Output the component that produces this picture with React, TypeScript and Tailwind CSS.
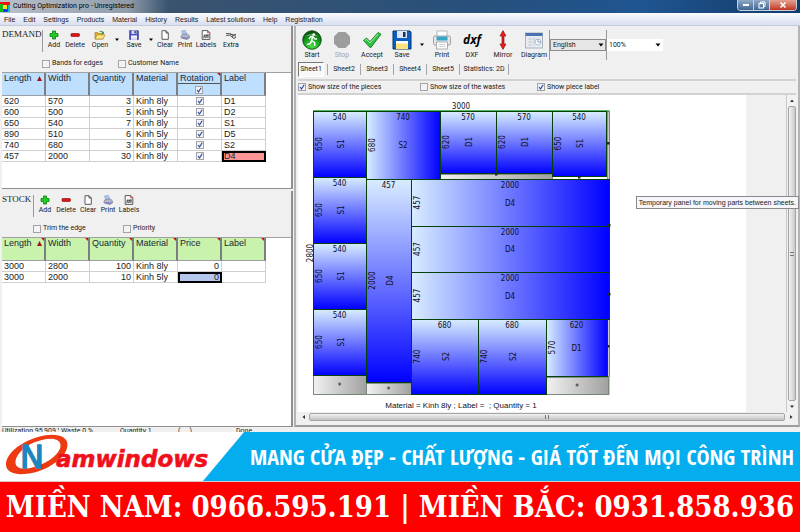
import React from "react";
import clsx from "clsx";

type CellValue = string | boolean;

interface Column {
  label: string;
  sorted?: boolean;
  flagged?: boolean;
  toggle?: boolean;
  numeric?: boolean;
}

interface Piece {
  x: number;
  y: number;
  w: number;
  h: number;
  width: string;
  height: string;
  label: string;
  dir: "down" | "right";
}

const MENU = [
  "File",
  "Edit",
  "Settings",
  "Products",
  "Material",
  "History",
  "Results",
  "Latest solutions",
  "Help",
  "Registration",
];

const DEMAND_COLUMNS: Column[] = [
  { label: "Length", sorted: true },
  { label: "Width" },
  { label: "Quantity", numeric: true },
  { label: "Material" },
  { label: "Rotation", toggle: true, flagged: true },
  { label: "Label" },
];

const DEMAND_ROWS: CellValue[][] = [
  ["620", "570", "3", "Kinh 8ly", true, "D1"],
  ["600", "500", "5", "Kinh 5ly", true, "D2"],
  ["650", "540", "7", "Kinh 8ly", true, "S1"],
  ["890", "510", "6", "Kinh 5ly", true, "D5"],
  ["740", "680", "3", "Kinh 8ly", true, "S2"],
  ["457", "2000", "30", "Kinh 8ly", true, "D4"],
];

const STOCK_COLUMNS: Column[] = [
  { label: "Length", sorted: true, flagged: true },
  { label: "Width", flagged: true },
  { label: "Quantity", numeric: true, flagged: true },
  { label: "Material", flagged: true },
  { label: "Price", numeric: true, flagged: true },
  { label: "Label", flagged: true },
];

const STOCK_ROWS: CellValue[][] = [
  ["3000", "2800", "100", "Kinh 8ly", "0", ""],
  ["3000", "2000", "10", "Kinh 5ly", "0", ""],
];

const SHEETS = ["Sheet1", "Sheet2", "Sheet3", "Sheet4", "Sheet5"];

const PIECES: Piece[] = [
  { x: 15, y: 16, w: 53, h: 66, width: "540", height: "650", label: "S1", dir: "down" },
  { x: 15, y: 82, w: 53, h: 66, width: "540", height: "650", label: "S1", dir: "down" },
  { x: 15, y: 148, w: 53, h: 66, width: "540", height: "650", label: "S1", dir: "down" },
  { x: 15, y: 214, w: 53, h: 66, width: "540", height: "650", label: "S1", dir: "down" },
  { x: 68, y: 16, w: 74, h: 68, width: "740", height: "680", label: "S2", dir: "right" },
  { x: 142, y: 16, w: 56, h: 62, width: "570", height: "620", label: "D1", dir: "down" },
  { x: 198, y: 16, w: 56, h: 62, width: "570", height: "620", label: "D1", dir: "down" },
  { x: 254, y: 16, w: 54, h: 65, width: "540", height: "650", label: "S1", dir: "down" },
  { x: 68, y: 84, w: 45, h: 203, width: "457", height: "2000", label: "D4", dir: "down" },
  { x: 113, y: 84, w: 198, h: 47, width: "2000", height: "457", label: "D4", dir: "right" },
  { x: 113, y: 131, w: 198, h: 46, width: "2000", height: "457", label: "D4", dir: "right" },
  { x: 113, y: 177, w: 198, h: 47, width: "2000", height: "457", label: "D4", dir: "right" },
  { x: 113, y: 224, w: 67, h: 75, width: "680", height: "740", label: "S2", dir: "down" },
  { x: 180, y: 224, w: 68, h: 75, width: "680", height: "740", label: "S2", dir: "down" },
  { x: 248, y: 224, w: 61, h: 57, width: "620", height: "570", label: "D1", dir: "right" },
];

const WASTES = [
  { x: 15, y: 280, w: 53, h: 19, star: true },
  { x: 68, y: 288, w: 45, h: 11, star: true },
  { x: 248, y: 282, w: 62, h: 17, star: true },
  { x: 142, y: 79, w: 112, h: 5, star: false },
  { x: 309, y: 16, w: 2, h: 68, star: false },
  { x: 309, y: 224, w: 2, h: 57, star: false },
];

const MARKS = [
  [198, 79],
  [281, 82],
  [310, 48],
  [311, 130],
  [311, 199],
  [310, 251],
];

function AddIcon() {
  return (
    <svg viewBox="0 0 10 10" className="size-[10px]">
      <path d="M3.5 1h3v2.5H9v3H6.500V9h-3V6.500H1v-3h2.500z" fill="#1fd01f" stroke="#0a7a14" strokeWidth="0.8" />
    </svg>
  );
}

function DeleteIcon() {
  return (
    <svg viewBox="0 0 10 10" className="size-[10px]">
      <rect x="1" y="3.600" width="8.400" height="2.800" rx="0.600" fill="#e01818" stroke="#8c0a0a" strokeWidth="0.7" />
    </svg>
  );
}

function OpenIcon() {
  return (
    <svg viewBox="0 0 12 10" className="h-[10px] w-3">
      <path d="M1 9V2.500h3l1 1h4V9z" fill="#d9b233" stroke="#9a7a14" strokeWidth="0.6" />
      <path d="M1 9l2-4.200h8L9 9z" fill="#ffe680" stroke="#9a7a14" strokeWidth="0.6" />
      <path d="M5 2.200C6 .4 8 .4 9 2l1-.6v2.600H7.500L8.200 3C7.500 1.800 6.200 1.600 5 2.200z" fill="#3ca03c" />
    </svg>
  );
}

function SaveIcon({ large = false }: { large?: boolean }) {
  return (
    <svg viewBox="0 0 20 20" className={large ? "size-5" : "size-[10px]"}>
      <path d="M1 1h17l1 1.500V19H1z" fill={large ? "#0b5ec2" : "#4a4fc4"} stroke={large ? "#08366e" : "#2a2c84"} />
      <rect x="5" y="1" width="10" height="7" fill={large ? "#dfe8f2" : "#d8daf8"} />
      <rect x="11" y="2" width="2.500" height="5" fill="#1a2f56" />
      <rect x="4" y="11" width="12" height="8" fill="#fff" />
      <rect x="4" y="13.500" width="12" height="5.500" fill={large ? "#ffe27a" : "#dfe0f4"} />
    </svg>
  );
}

function ClearIcon() {
  return (
    <svg viewBox="0 0 10 10" className="size-[10px]">
      <path d="M2 .7h4L8.300 3v6.300H2z" fill="#fff" stroke="#333" strokeWidth="0.8" />
      <path d="M6 .7V3h2.300" fill="none" stroke="#333" strokeWidth="0.8" />
    </svg>
  );
}

function SmallPrintIcon() {
  return (
    <svg viewBox="0 0 10 10" className="size-[10px]">
      <path d="M2.500 5L1.600 1l3.600-.8L7 4.500z" fill="#a9c6f5" stroke="#7d8fc0" strokeWidth="0.5" />
      <path d="M1 6l1.500-1.600 5-.4L9.500 6v2L7 9.500 1 8z" fill="#b4b6c8" stroke="#74768c" strokeWidth="0.6" />
      <path d="M2.500 7.600l4 .8 2-1.200" fill="none" stroke="#4f62c8" strokeWidth="0.9" />
    </svg>
  );
}

function LabelsIcon() {
  return (
    <svg viewBox="0 0 10 10" className="size-[10px]">
      <path d="M1.200.6h5.600L8.800 2.600v6.800H1.200z" fill="#fff" stroke="#333" strokeWidth="0.8" />
      <path d="M6.600.8v2h2" fill="none" stroke="#c22" strokeWidth="0.8" />
      <path d="M2.600 8.200L4 4.200m.6 4L6 4.200m1 4V4M2.600 5.400h5M2.400 7h5" stroke="#333" strokeWidth="0.7" />
    </svg>
  );
}

function ExtraIcon() {
  return (
    <svg viewBox="0 0 12 10" className="h-[10px] w-3">
      <path d="M1 3.500l4 .3 3 1.200 3-.6M1 5.400l3.600-.2L8 7.600M5 3.800l3 1.600" fill="none" stroke="#444" strokeWidth="0.9" />
      <circle cx="9" cy="6.800" r="1.600" fill="#ddd" stroke="#444" strokeWidth="0.8" />
    </svg>
  );
}

function StartIcon() {
  return (
    <svg viewBox="0 0 20 20" className="size-5">
      <defs>
        <radialGradient id="go" cx="0.5" cy="0.85" r="0.8">
          <stop offset="0" stopColor="#4be04b" />
          <stop offset="0.6" stopColor="#129a1c" />
          <stop offset="1" stopColor="#064d0b" />
        </radialGradient>
      </defs>
      <circle cx="10" cy="10" r="9.300" fill="url(#go)" stroke="#0b3d0d" strokeWidth="0.8" />
      <path d="M3 7a8 6 0 0 1 14 0c-4-2-10-2-14 0z" fill="#fff" opacity="0.35" />
      <circle cx="11.800" cy="4.600" r="1.400" fill="#fff" />
      <path
        d="M10.800 6.400L9.600 10.500l3 2 .2 3.500M9.600 10.500L8.400 13.500 4.800 14.600M7 9l1.500-2.200 2.500-.2 1.600 2.200 2.400.2"
        fill="none"
        stroke="#fff"
        strokeWidth="1.500"
        strokeLinejoin="round"
      />
    </svg>
  );
}

function StopIcon() {
  return (
    <svg viewBox="0 0 20 20" className="size-5">
      <path d="M6.500 2h7L18 6.500v7L13.500 18h-7L2 13.500v-7z" fill="#9d9d9d" />
    </svg>
  );
}

function AcceptIcon() {
  return (
    <svg viewBox="0 0 20 20" className="size-5">
      <path d="M1.500 10.500L4.500 8l3.500 3.500L16 2.500l3 1.800L8.500 18z" fill="#2fc043" stroke="#128024" strokeWidth="0.9" />
      <path d="M3 10.500l1.500-1.200L8 13 16 4" fill="none" stroke="#a5f0ac" strokeWidth="1" />
    </svg>
  );
}

function PrintIcon() {
  return (
    <svg viewBox="0 0 20 20" className="size-5">
      <rect x="5" y="1" width="10" height="6" fill="#fff" stroke="#9aa0a6" strokeWidth="0.7" />
      <rect x="1.500" y="6" width="17" height="9" rx="1.500" fill="#e4e6e8" stroke="#8b9096" strokeWidth="0.8" />
      <rect x="4.500" y="6.500" width="11" height="4" fill="#39a6c6" />
      <rect x="4.500" y="12" width="11" height="7" fill="#fff" stroke="#8b9096" strokeWidth="0.7" />
      <path d="M6.500 14.500h7M6.500 16.500h7" stroke="#b9bec4" strokeWidth="0.7" />
    </svg>
  );
}

function DxfIcon() {
  return <span className="font-['Open_Sans',sans-serif] text-[12px]/[20px] font-bold text-black italic">dxf</span>;
}

function MirrorIcon() {
  return (
    <svg viewBox="0 0 20 20" className="size-5">
      <path d="M10 .6l3 5.400h-2v8h2l-3 5.400L7 14h2V6H7z" fill="#ee1c1c" stroke="#7a0b0b" strokeWidth="0.6" />
    </svg>
  );
}

function DiagramIcon() {
  return (
    <svg viewBox="0 0 20 20" className="size-5">
      <rect x="1.500" y="3" width="17" height="15" fill="#e9edf3" stroke="#9aa3b0" strokeWidth="0.8" />
      <rect x="1.500" y="3" width="17" height="3" fill="#4a72b0" />
      <path d="M4 9h8M4 12h8M4 15h5M6 7.500v9M10 7.500v9" stroke="#c6ccd6" strokeWidth="0.8" />
      <circle cx="14" cy="12" r="3" fill="#f7f7f7" stroke="#aab3c2" strokeWidth="0.8" />
      <path d="M14 9v3h3" fill="none" stroke="#7d9ccc" strokeWidth="0.9" />
    </svg>
  );
}

function ToolButton({
  icon,
  label,
  className,
  disabled = false,
}: {
  icon: React.ReactNode;
  label: string;
  className: string;
  disabled?: boolean;
}) {
  return (
    <button
      type="button"
      disabled={disabled}
      className={clsx("flex flex-col items-center gap-px whitespace-nowrap disabled:text-[#a5a5a5]", className)}
    >
      {icon}
      <span>{label}</span>
    </button>
  );
}

function DropArrow({ label, className }: { label: string; className: string }) {
  return (
    <button type="button" aria-label={label} className={clsx("flex items-center justify-center", className)}>
      <svg viewBox="0 0 6 4" className="h-1 w-1.5">
        <path d="M1 .5h4L3 3z" fill="#000" />
      </svg>
    </button>
  );
}

function TickBox({ id, checked = false, label }: { id?: string; checked?: boolean; label?: string }) {
  return (
    <span className="relative inline-block size-2 shrink-0">
      <input
        id={id}
        type="checkbox"
        defaultChecked={checked}
        aria-label={label}
        className="peer block size-2 appearance-none border border-[#a3a3a3] bg-[#f1f3f7]"
      />
      <svg viewBox="0 0 8 8" className="pointer-events-none absolute inset-0 hidden size-2 peer-checked:block">
        <path d="M2 4l1.500 2L6.200 1.800" fill="none" stroke="#2f4a9c" strokeWidth="1.200" />
      </svg>
    </span>
  );
}

function Option({
  id,
  label,
  checked,
  className,
}: {
  id: string;
  label: string;
  checked?: boolean;
  className?: string;
}) {
  return (
    <span className={clsx("flex items-center gap-0.5 whitespace-nowrap", className)}>
      <TickBox id={id} checked={checked} />
      <label htmlFor={id}>{label}</label>
    </span>
  );
}

function DataGrid({
  name,
  columns,
  rows,
  tone,
  selected,
}: {
  name: string;
  columns: Column[];
  rows: CellValue[][];
  tone: "blue" | "green";
  selected: [number, number];
}) {
  return (
    <table
      aria-label={name}
      className="w-[264px] table-fixed border-separate border-spacing-0 font-['Liberation_Sans',sans-serif] text-[9px]/[10px]"
    >
      <thead>
        <tr>
          {columns.map((column) => (
            <th
              key={column.label}
              className={clsx(
                "relative h-[23px] border-r-2 border-b border-r-[#7b7f84] border-b-[#9aa0a6] p-0 text-left align-top font-normal text-[#1c2733]",
                tone === "blue" ? "bg-[#bfdfff]" : "bg-[#c9f3ad]"
              )}
            >
              <span className="block pl-0.5">{column.label}</span>
              {column.toggle ? (
                <span className="flex h-3 items-center justify-center border-t border-[#555]">
                  <TickBox checked label="Rotate all pieces" />
                </span>
              ) : null}
              {column.sorted ? (
                <svg viewBox="0 0 5 5" className="absolute top-[3px] right-0.5 size-[5px]">
                  <path d="M2.500 0L5 5H0z" fill="#a01414" />
                </svg>
              ) : null}
              {column.flagged ? (
                <svg viewBox="0 0 3 3" className="absolute top-0 right-0 size-[3px]">
                  <path d="M0 0h3v3z" fill="#e00" />
                </svg>
              ) : null}
            </th>
          ))}
        </tr>
      </thead>
      <tbody>
        {rows.map((row, r) => (
          <tr key={r}>
            {row.map((value, c) => {
              const isSelected = selected[0] === r && selected[1] === c;
              return (
                <td
                  key={c}
                  className={clsx(
                    "h-[11px] border-r border-b border-[#cfcfcf] p-0 px-0.5 text-[#222]",
                    columns[c].numeric && "text-right",
                    columns[c].toggle && "text-center",
                    isSelected && "outline-2 -outline-offset-2 outline-black",
                    isSelected && (tone === "blue" ? "bg-[#ff9696]" : "bg-[#b4c8ee]")
                  )}
                >
                  {typeof value === "boolean" ? (
                    <span className="flex items-center justify-center">
                      <TickBox checked={value} label={`Rotate ${row[row.length - 1]}`} />
                    </span>
                  ) : (
                    value
                  )}
                </td>
              );
            })}
          </tr>
        ))}
      </tbody>
    </table>
  );
}

function DemandPanel() {
  return (
    <section className="border-r-2 border-b border-[#8f8f8f] bg-white">
      <div className="flex border-b border-[#a0a0a0] bg-[#f0f0f0] pt-1 pb-1">
        <h2 className="w-10 shrink-0 font-['Liberation_Serif',serif] text-[9px]/[9px]">DEMAND</h2>
        <div>
          <div className="flex h-[22px] items-start border-l border-[#9a9a9a] pl-px">
            <ToolButton icon={<AddIcon />} label="Add" className="w-5" />
            <ToolButton icon={<DeleteIcon />} label="Delete" className="w-[22px]" />
            <ToolButton icon={<OpenIcon />} label="Open" className="w-7" />
            <DropArrow label="Open recent" className="h-5 w-1.5" />
            <ToolButton icon={<SaveIcon />} label="Save" className="w-7" />
            <DropArrow label="Save options" className="h-5 w-1.5" />
            <ToolButton icon={<ClearIcon />} label="Clear" className="w-[22px]" />
            <ToolButton icon={<SmallPrintIcon />} label="Print" className="w-[18px]" />
            <ToolButton icon={<LabelsIcon />} label="Labels" className="w-6" />
            <ToolButton icon={<ExtraIcon />} label="Extra" className="w-[26px]" />
          </div>
          <div className="mt-[7px] flex h-[9px] items-center">
            <Option id="bands" label="Bands for edges" className="w-[76px]" />
            <Option id="customer" label="Customer Name" />
          </div>
        </div>
      </div>
      <div className="h-[115px] overflow-hidden">
        <DataGrid name="Demand" columns={DEMAND_COLUMNS} rows={DEMAND_ROWS} tone="blue" selected={[5, 5]} />
      </div>
    </section>
  );
}

function StockPanel() {
  return (
    <section className="flex-1 border-r-2 border-b border-[#8f8f8f] bg-white">
      <div className="flex border-b border-[#a0a0a0] bg-[#f0f0f0] pt-1 pb-1">
        <h2 className="w-[31px] shrink-0 font-['Liberation_Serif',serif] text-[9px]/[9px]">STOCK</h2>
        <div>
          <div className="flex h-[22px] items-start border-l border-[#9a9a9a] pl-px">
            <ToolButton icon={<AddIcon />} label="Add" className="w-5" />
            <ToolButton icon={<DeleteIcon />} label="Delete" className="w-[22px]" />
            <ToolButton icon={<ClearIcon />} label="Clear" className="w-[22px]" />
            <ToolButton icon={<SmallPrintIcon />} label="Print" className="w-[18px]" />
            <ToolButton icon={<LabelsIcon />} label="Labels" className="w-6" />
          </div>
          <div className="mt-[7px] flex h-[9px] items-center">
            <Option id="trim" label="Trim the edge" className="w-[90px]" />
            <Option id="priority" label="Priority" />
          </div>
        </div>
      </div>
      <DataGrid name="Stock" columns={STOCK_COLUMNS} rows={STOCK_ROWS} tone="green" selected={[1, 4]} />
    </section>
  );
}

function Picker({ label, value, className }: { label: string; value: string; className: string }) {
  return (
    <span className="relative block">
      <select aria-label={label} className={clsx("block h-3 w-14 appearance-none pl-0.5", className)}>
        <option>{value}</option>
      </select>
      <svg viewBox="0 0 6 4" className="pointer-events-none absolute top-1 right-0.5 h-1 w-1.5">
        <path d="M.5 .5h5L3 3.500z" fill="#000" />
      </svg>
    </span>
  );
}

// A vertical caption, turned to read bottom to top
function TurnedText({ x, y, children }: { x: number; y: number; children: React.ReactNode }) {
  return (
    <text x={x} y={y + 3} textAnchor="middle" transform={`rotate(-90 ${x} ${y})`}>
      {children}
    </text>
  );
}

function CuttingLayout() {
  return (
    <svg
      viewBox="0 0 448 316"
      className="block h-[316px] w-[448px] font-['DejaVu_Sans_Condensed','DejaVu_Sans',sans-serif] text-[8px]"
      fill="#10101c"
    >
      <defs>
        <linearGradient id="down" x1="0" y1="0" x2="0" y2="1">
          <stop offset="0" stopColor="#d8edff" />
          <stop offset="1" stopColor="#0000ff" />
        </linearGradient>
        <linearGradient id="right">
          <stop offset="0" stopColor="#d8edff" />
          <stop offset="1" stopColor="#0000ff" />
        </linearGradient>
        <linearGradient id="waste">
          <stop offset="0" stopColor="#f2f2f2" />
          <stop offset="1" stopColor="#a0a0a0" />
        </linearGradient>
      </defs>
      <rect x="15.500" y="15.500" width="295.500" height="284" fill="#fff" stroke="#5cb85c" />
      {WASTES.map((waste) => (
        <g key={`${waste.x}-${waste.y}`}>
          <rect
            x={waste.x + 0.5}
            y={waste.y + 0.5}
            width={waste.w}
            height={waste.h}
            fill="url(#waste)"
            stroke="#6f7a6f"
            strokeWidth="0.8"
          />
          {waste.star ? (
            <text x={waste.x + waste.w / 2} y={waste.y + waste.h / 2 + 4} textAnchor="middle">
              *
            </text>
          ) : null}
        </g>
      ))}
      {PIECES.map((piece) => {
        const cx = piece.x + piece.w / 2;
        const cy = piece.y + piece.h / 2;
        return (
          <g key={`${piece.x}-${piece.y}`}>
            <rect
              x={piece.x + 0.5}
              y={piece.y + 0.5}
              width={piece.w}
              height={piece.h}
              fill={piece.dir === "down" ? "url(#down)" : "url(#right)"}
              stroke="#06400a"
            />
            <text x={cx} y={piece.y + 9} textAnchor="middle">
              {piece.width}
            </text>
            <TurnedText x={piece.x + 6} y={cy}>
              {piece.height}
            </TurnedText>
            {piece.dir === "down" ? (
              <TurnedText x={cx + 1} y={cy}>
                {piece.label}
              </TurnedText>
            ) : (
              <text x={cx} y={cy + 3} textAnchor="middle">
                {piece.label}
              </text>
            )}
          </g>
        );
      })}
      {MARKS.map(([x, y]) => (
        <rect key={`${x}-${y}`} x={x - 1} y={y - 1} width="2.500" height="2.500" fill="#1d2b1d" />
      ))}
      <text x="163" y="14" textAnchor="middle">
        3000
      </text>
      <TurnedText x={12} y={158}>
        2800
      </TurnedText>
      <text x="163" y="313" textAnchor="middle" xmlSpace="preserve" fontFamily="Liberation Sans, sans-serif">
        {"Material = Kinh 8ly ; Label =  ; Quantity = 1"}
      </text>
    </svg>
  );
}

function ResultPanel() {
  return (
    <section className="flex min-w-0 flex-1 flex-col border-2 border-t-0 border-[#b4b4b4] border-b-[#9c9c9c] bg-[#f0f0f0]">
      <div className="flex h-[35px] items-start pt-1 pl-px">
        <ToolButton icon={<StartIcon />} label="Start" className="w-[30px]" />
        <ToolButton icon={<StopIcon />} label="Stop" className="w-[30px]" disabled />
        <ToolButton icon={<AcceptIcon />} label="Accept" className="w-[30px]" />
        <ToolButton icon={<SaveIcon large />} label="Save" className="w-[30px]" />
        <DropArrow label="Save options" className="h-[30px] w-2.5" />
        <ToolButton icon={<PrintIcon />} label="Print" className="w-[30px]" />
        <ToolButton icon={<DxfIcon />} label="DXF" className="w-[30px]" />
        <ToolButton icon={<MirrorIcon />} label="Mirror" className="w-8" />
        <ToolButton icon={<DiagramIcon />} label="Diagram" className="w-[30px]" />
        <div className="flex h-[30px] items-center border-l border-[#9a9a9a]">
          <Picker label="Language" value="English" className="border border-[#8c8c8c] bg-[#e6e6e6]" />
        </div>
        <div className="flex h-[30px] items-center border-l border-[#9a9a9a]">
          <Picker label="Zoom" value="100%" className="bg-white" />
        </div>
      </div>

      <div role="tablist" className="mt-px flex h-[15px] items-stretch pl-0.5">
        {SHEETS.map((sheet, i) => (
          <button
            key={sheet}
            type="button"
            role="tab"
            aria-selected={i === 0}
            className={clsx(
              "text-center",
              i === 0
                ? "mr-[3px] w-[26px] border border-[#777] border-r-white border-b-white bg-[#f8f8f8]"
                : "my-0.5 w-[33px] border-l border-[#a6a6a6]"
            )}
          >
            {sheet}
          </button>
        ))}
        <button type="button" role="tab" aria-selected={false} className="my-0.5 w-[50px] border-x border-[#a6a6a6]">
          Statistics: 2D
        </button>
      </div>

      <div className="mx-0.5 mt-0.5 flex h-4 items-center border-y-2 border-[#d2d2d2]">
        <Option id="pieces" label="Show size of the pieces" checked className="w-[122px]" />
        <Option id="wastes" label="Show size of the wastes" className="w-[117px]" />
        <Option id="labels" label="Show piece label" checked />
      </div>

      <div className="ml-0.5 flex flex-1">
        <div className="bg-white">
          <CuttingLayout />
        </div>
        <div className="relative flex-1">
          <div
            role="tooltip"
            className="absolute top-[101px] -right-[13px] z-10 border border-[#8a8a8a] bg-[#f6f6fa] px-0.5 py-px font-['Liberation_Sans',sans-serif] text-[7px]/[9px] whitespace-nowrap text-[#222]"
          >
            Temporary panel for moving parts between sheets.
          </div>
        </div>
        <div className="mr-0.5 flex w-[10px] flex-col items-center border-l border-[#c8c8c8] bg-[#f2f2f2]">
          <button type="button" aria-label="Scroll up" className="flex h-[11px] items-center">
            <svg viewBox="0 0 6 4" className="h-1 w-1.5">
              <path d="M1 3h4L3 .5z" fill="#333" />
            </svg>
          </button>
          <div className="flex w-2 flex-1 items-center justify-center rounded-xs border border-[#a4a4a4] bg-linear-to-r from-[#f2f2f2] to-[#c9c9cd]">
            <span className="h-1 w-1 border-y border-[#777]" />
          </div>
          <button type="button" aria-label="Scroll down" className="flex h-[11px] items-center">
            <svg viewBox="0 0 6 4" className="h-1 w-1.5">
              <path d="M1 .5h4L3 3z" fill="#333" />
            </svg>
          </button>
        </div>
      </div>
      <div className="mx-0.5 mb-[3px] flex h-[10px] items-center">
        <button type="button" aria-label="Scroll left" className="flex w-[11px] justify-center">
          <svg viewBox="0 0 4 6" className="h-1.5 w-1">
            <path d="M3 1v4L.5 3z" fill="#333" />
          </svg>
        </button>
        <div className="flex h-2 flex-1 items-center justify-center rounded-xs border border-[#a4a4a4] bg-linear-to-b from-[#f2f2f2] to-[#c2c2c6]">
          <span className="h-1 w-1 border-x border-[#777]" />
        </div>
        <button type="button" aria-label="Scroll right" className="flex w-[11px] justify-center">
          <svg viewBox="0 0 4 6" className="h-1.5 w-1">
            <path d="M1 1v4l2.500-2z" fill="#333" />
          </svg>
        </button>
      </div>
    </section>
  );
}

function TitleBar() {
  return (
    <header className="flex h-[13px] items-start justify-between bg-[linear-gradient(90deg,#b9c1ca_0%,#8f9cab_16%,#3a536e_21%,#27507c_60%,#1f5591_80%,#123a68_100%)]">
      <div className="flex h-full items-center gap-[3px]">
        <svg viewBox="0 0 10 10" className="size-[10px]">
          <rect width="10" height="10" fill="#e11" />
          <rect y="2" width="3" height="8" fill="#14b814" />
          <rect x="3" y="3" width="4" height="4" fill="#ffe11a" />
          <rect x="4" y="7" width="3" height="3" fill="#1838e0" />
          <rect x="8" y="3" width="2" height="7" fill="#14b8c8" />
        </svg>
        <h1 className="text-black">Cutting Optimization pro - Unregistered</h1>
      </div>
      <div className="mr-[3px] flex h-[11px] overflow-hidden rounded-b-sm border border-t-0 border-[#c4d2e2]">
        <button
          type="button"
          aria-label="Minimize"
          className="flex w-4 items-center justify-center border-r border-[#c4d2e2] bg-linear-to-b from-[#8fa9c6] to-[#3f6792]"
        >
          <span className="h-[2px] w-1.5 bg-white" />
        </button>
        <button
          type="button"
          aria-label="Restore"
          className="flex w-4 items-center justify-center border-r border-[#c4d2e2] bg-linear-to-b from-[#8fa9c6] to-[#3f6792]"
        >
          <svg viewBox="0 0 8 8" className="size-2" fill="none" stroke="#fff">
            <path d="M2.500 2.500v-1.500h4.500v4.500H5.500" />
            <rect x="1" y="2.500" width="4.500" height="4.500" />
          </svg>
        </button>
        <button
          type="button"
          aria-label="Close"
          className="flex w-[26px] items-center justify-center bg-linear-to-b from-[#e2a093] to-[#c2301c]"
        >
          <svg viewBox="0 0 8 8" className="size-2" stroke="#fff" strokeWidth="1.600">
            <path d="M1.500 1.500l5 5M6.500 1.500l-5 5" />
          </svg>
        </button>
      </div>
    </header>
  );
}

function Promo() {
  return (
    <footer>
      <div className="flex h-[50px] border-b border-[#d8c8c8] bg-white">
        <div className="w-[203px] shrink-0">
          <svg viewBox="0 0 212 49" className="relative z-10 h-[49px] w-[212px]">
            <path
              fillRule="evenodd"
              d="M38 5C55 0 68 4 67.500 13 67 25 50 37 32 41 17 44 6 41 6 32.500 6 22 20 10 38 5zM42 8C28 11 16 21 15.500 30 15 37 24 38 34 35 48 31 60 22 60.500 14 61 7 52 5.500 42 8z"
              fill="#ee3a12"
            />
            <text
              x="20"
              y="36"
              fontSize="32"
              fill="#1f86bd"
              stroke="#1f86bd"
              strokeWidth="1.500"
              fontFamily="DejaVu Sans, sans-serif"
            >
              N
            </text>
            <text
              x="56"
              y="35"
              fontSize="23"
              fontWeight="700"
              fontStyle="italic"
              fill="#f0101c"
              stroke="#f0101c"
              strokeWidth="0.6"
              fontFamily="DejaVu Sans, sans-serif"
            >
              amwindows
            </text>
          </svg>
        </div>
        <p className="flex flex-1 items-center justify-center bg-[#04adee] pl-[41px] font-['Liberation_Sans_Narrow','Open_Sans_Condensed','Noto_Sans_Condensed','Roboto_Condensed','Open_Sans',sans-serif] text-[22px]/[49px] font-semibold whitespace-nowrap text-white [clip-path:polygon(41px_0,100%_0,100%_100%,0_100%)]">
          MANG CỬA ĐẸP - CHẤT LƯỢNG - GIÁ TỐT ĐẾN MỌI CÔNG TRÌNH
        </p>
      </div>
      <p className="h-[50px] bg-[#ff0000] text-center font-['DejaVu_Serif_Condensed','DejaVu_Serif',serif] text-[29px]/[50px] font-bold whitespace-nowrap text-white">
        MIỀN NAM: 0966.595.191 | MIỀN BẮC: 0931.858.936
      </p>
    </footer>
  );
}

export default function App() {
  return (
    <div className="flex min-h-screen flex-col overflow-x-hidden bg-[#f0f0f0] font-[Roboto,sans-serif] text-[7px]/[9px] text-[#1a1a1a]">
      <TitleBar />
      <nav className="flex h-[13px] items-center gap-2 border-b border-[#c5cbe0] bg-linear-to-b from-[#fafbff] to-[#d9dff0] pl-1 font-['Liberation_Sans',sans-serif]">
        {MENU.map((item) => (
          <button key={item} type="button">
            {item}
          </button>
        ))}
      </nav>
      <main className="flex flex-1">
        <div className="flex w-[294px] shrink-0 flex-col gap-0.5 pr-px pl-0.5">
          <DemandPanel />
          <StockPanel />
        </div>
        <ResultPanel />
      </main>
      {/* Status line, its lower half tucked under the banner */}
      <div className="flex h-[5px] overflow-hidden whitespace-nowrap text-[#222]">
        <span className="w-[59px] shrink-0 overflow-hidden pl-0.5">Utilization 95,909 %</span>
        <span className="w-[59px] pl-0.5">Waste 0 %</span>
        <span className="w-[58px] pl-0.5">Quantity 1</span>
        <span className="w-[60px] pl-0.5">( ... )</span>
        <span>Done</span>
      </div>
      <Promo />
    </div>
  );
}
